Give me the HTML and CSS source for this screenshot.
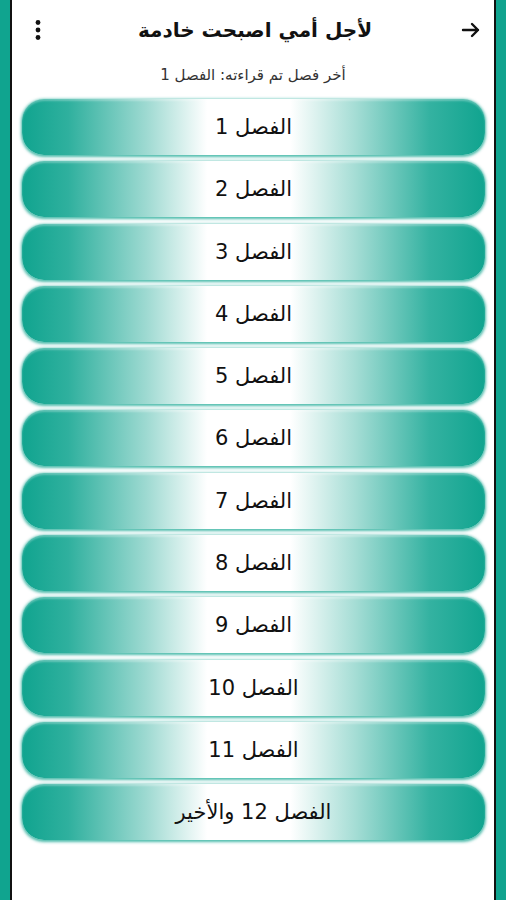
FILE: index.html
```html
<!DOCTYPE html>
<html lang="ar" dir="rtl">
<head>
  <meta charset="utf-8">
  <title>لأجل أمي اصبحت خادمة</title>
  <link rel="stylesheet" href="styles.css">
</head>
<body>
  <div class="frame">
    <div class="toolbar">
      <span class="back">
        <svg width="24" height="24" viewBox="0 0 24 24"><path d="M4 12h15M13 6l6 6-6 6" fill="none" stroke="#111" stroke-width="2.4" stroke-linecap="round" stroke-linejoin="round"/></svg>
      </span>
      <h1>لأجل أمي اصبحت خادمة</h1>
      <span class="menu">
        <svg width="10" height="22" viewBox="0 0 10 22"><circle cx="5" cy="3.5" r="2.4" fill="#111"/><circle cx="5" cy="11" r="2.4" fill="#111"/><circle cx="5" cy="18.5" r="2.4" fill="#111"/></svg>
      </span>
    </div>
    <p class="last">أخر فصل تم قراءته: الفصل 1</p>
    <div class="list">
      <button class="chapter">الفصل 1</button>
      <button class="chapter">الفصل 2</button>
      <button class="chapter">الفصل 3</button>
      <button class="chapter">الفصل 4</button>
      <button class="chapter">الفصل 5</button>
      <button class="chapter">الفصل 6</button>
      <button class="chapter">الفصل 7</button>
      <button class="chapter">الفصل 8</button>
      <button class="chapter">الفصل 9</button>
      <button class="chapter">الفصل 10</button>
      <button class="chapter">الفصل 11</button>
      <button class="chapter">الفصل 12 والأخير</button>
    </div>
  </div>
</body>
</html>
```

FILE: styles.css
```css
body {
  margin: 0;
  padding: 0;
  background-color: #10a48f;
  font-family: "DejaVu Sans", "Noto Sans", sans-serif;
  color: #111;
}
.frame {
  margin: 0 10px;
  height: 900px;
  background-color: #fff;
  border-left: 2px solid #111;
  border-right: 2px solid #111;
  box-sizing: border-box;
}
.toolbar {
  display: flex;
  align-items: center;
  justify-content: space-between;
  height: 60px;
  padding: 0 11px 0 21px;
}
.toolbar h1 {
  flex: 1;
  margin: 0;
  font-size: 20px;
  font-weight: bold;
  text-align: center;
  padding-left: 8px;
}
.back, .menu {
  display: flex;
  align-items: center;
}
.last {
  margin: 0;
  height: 32px;
  line-height: 30px;
  text-align: center;
  font-size: 15px;
  color: #333;
}
.list {
  display: flex;
  flex-direction: column;
  gap: 6.3px;
  padding: 7px 9px 0 10px;
}
.chapter {
  height: 56px;
  border: none;
  border-radius: 22px;
  font-family: "DejaVu Sans", sans-serif;
  font-size: 21px;
  color: #111;
  background: linear-gradient(to right, #10a48f 0%, #2fb09e 10%, #9fdad2 27%, #fff 40%, #fff 58%, #a5ddd5 72%, #34b2a1 88%, #10a48f 100%);
  box-shadow: 0 1px 3px 1px rgba(16, 164, 143, 0.75), inset 0 2px 2px rgba(255, 255, 255, 0.3);
}
```
